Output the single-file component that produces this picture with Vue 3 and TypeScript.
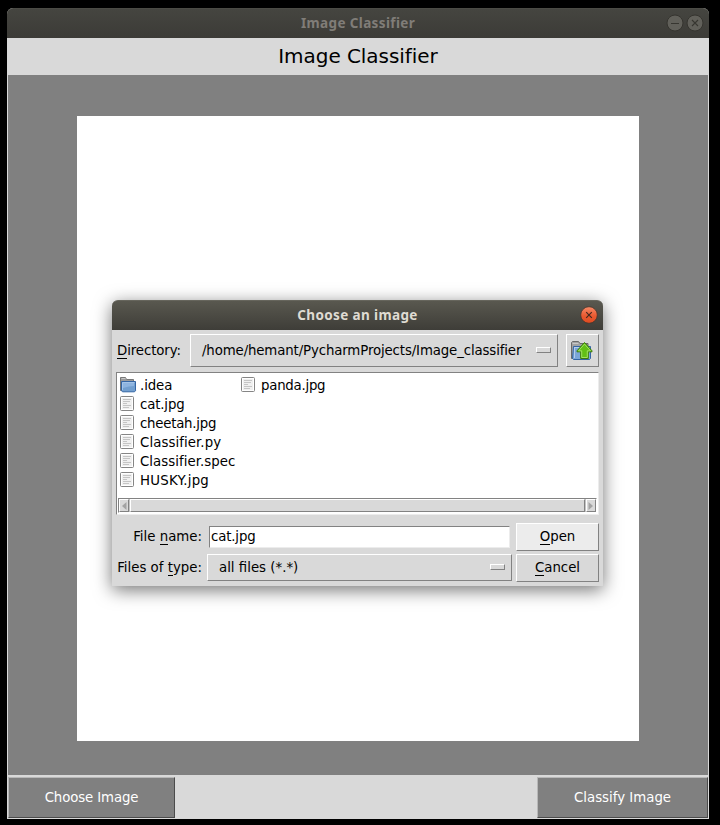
<script setup lang="ts">
interface Entry {
  name: string
  kind: 'folder' | 'file'
  tracking: number
}

const columns: Entry[][] = [
  [
    { name: '.idea', kind: 'folder', tracking: -0.1 },
    { name: 'cat.jpg', kind: 'file', tracking: -0.15 },
    { name: 'cheetah.jpg', kind: 'file', tracking: -0.25 },
    { name: 'Classifier.py', kind: 'file', tracking: 0.07 },
    { name: 'Classifier.spec', kind: 'file', tracking: 0.03 },
    { name: 'HUSKY.jpg', kind: 'file', tracking: 0.25 },
  ],
  [{ name: 'panda.jpg', kind: 'file', tracking: -0.25 }],
]
const fileName = 'cat.jpg'
const directory = '/home/hemant/PycharmProjects/Image_classifier'
</script>

<template>
  <div class="desktop">
    <main class="window">
      <header class="titlebar main-bar">
        <span class="bar-text">Image Classifier</span>
        <div class="controls">
          <svg class="ctl" viewBox="0 0 18 18">
            <circle cx="9" cy="9" r="8" fill="#61605a" stroke="#35342f" />
            <path d="M5 9.5h8" stroke="#373631" />
          </svg>
          <svg class="ctl" viewBox="0 0 18 18">
            <circle cx="9" cy="9" r="8" fill="#61605a" stroke="#35342f" />
            <path d="M6 6l6 6M12 6l-6 6" stroke="#373631" stroke-width="1.1" />
          </svg>
        </div>
      </header>
      <h1 class="heading">Image Classifier</h1>
      <section class="stage"><div class="canvas"></div></section>
      <footer class="footer">
        <button class="action choose">Choose Image</button>
        <button class="action classify">Classify Image</button>
      </footer>
    </main>

    <div class="dialog">
      <header class="titlebar dialog-bar">
        <span class="bar-text">Choose an image</span>
        <div class="controls">
          <svg class="ctl" viewBox="0 0 18 18">
            <defs>
              <linearGradient id="close" x1="0" y1="0" x2="0" y2="1">
                <stop offset="0" stop-color="#f58b68" />
                <stop offset=".55" stop-color="#ea5a31" />
                <stop offset="1" stop-color="#dd4a20" />
              </linearGradient>
            </defs>
            <circle cx="9" cy="9" r="8.3" fill="url(#close)" stroke="#45352c" stroke-width=".8" />
            <path d="M6.2 6.2l5.6 5.6M11.8 6.2l-5.6 5.6" stroke="#45291f" stroke-width="1.2" />
          </svg>
        </div>
      </header>

      <div class="dir-row">
        <label class="label dir-label"><u>D</u>irectory:</label>
        <div class="menu dir-menu raised">
          <span class="path">{{ directory }}</span>
          <i class="indicator raised"></i>
        </div>
        <button class="up raised">
          <svg width="22" height="20" viewBox="0 0 22 20">
            <path d="M.5 17.5V1.5l1-1h6l1.5 2h8v15z" fill="#a2a2a2" stroke="#6b6b6b" />
            <path d="M1.5 2.5h6" stroke="#c8c8c8" />
            <path d="M2.5 5.5h17v12l-1 1h-16l-1-1z" fill="#7ba6d8" stroke="#3465a4" />
            <path d="M3 6.5h16M3.5 7v10" stroke="#b4cdec" />
            <path d="M13.5 1.5l7.5 8.3v1h-3.7v6.7H9.7v-6.7H6v-1z" fill="#62bf16" stroke="#3c7b08" />
            <path d="M13.5 3.1l6 6.7h-3.2v6.7h-5.6V9.8H7.5z" fill="none" stroke="#a7e46b" stroke-width=".9" />
          </svg>
        </button>
      </div>

      <div class="list">
        <div class="columns">
          <ul v-for="(column, c) in columns" :key="c" class="column">
            <li v-for="entry in column" :key="entry.name" class="entry">
              <svg v-if="entry.kind === 'folder'" class="icon" viewBox="0 0 17 17">
                <path d="M.5 14.5v-13h5l1 2h7v11z" fill="#9b9b9b" stroke="#777" />
                <path d="M1.5 2.5h4" stroke="#c6c6c6" />
                <path d="M1.5 5.5h14v9.3l-1 1h-12l-1-1z" fill="#729fcf" stroke="#3465a4" />
                <path d="M2.5 14V6.5h12" fill="none" stroke="#a5c5e8" />
                <path d="M3 7h11v3q-5 0-11 2z" fill="#8eb4df" />
              </svg>
              <svg v-else class="icon" viewBox="0 0 17 17">
                <rect x=".5" y="1.5" width="13" height="14" rx="1" fill="#f0f0f0" stroke="#858585" />
                <rect x="1.5" y="2.5" width="11" height="12" fill="none" stroke="#fff" />
                <path d="M3 4.5h8M3 6.5h7M3 8.5h4M3 10.5h8M3 12.5h6" stroke="#c5c5c5" />
              </svg>
              <span :style="{ letterSpacing: entry.tracking + 'px' }">{{ entry.name }}</span>
            </li>
          </ul>
        </div>
        <div class="scrollbar">
          <div class="arrow raised"><svg width="6" height="10" viewBox="0 0 6 10"><path d="M5.5 1v8L1 5z" fill="#a3a3a3" /></svg></div>
          <div class="thumb raised"></div>
          <div class="arrow raised"><svg width="6" height="10" viewBox="0 0 6 10"><path d="M.5 1v8L5 5z" fill="#a3a3a3" /></svg></div>
        </div>
      </div>

      <div class="form">
        <label class="label right">File <u>n</u>ame:</label>
        <div class="input">{{ fileName }}</div>
        <button class="btn raised open"><span><u>O</u>pen</span></button>
        <label class="label right">Files of <u>t</u>ype:</label>
        <div class="menu type-menu raised">
          <span>all files (*.*)</span>
          <i class="indicator raised"></i>
        </div>
        <button class="btn raised"><span><u>C</u>ancel</span></button>
      </div>
    </div>
  </div>
</template>

<style>
body {
  background: #000;
  overflow: hidden;
}
</style>

<style scoped>
* {
  box-sizing: border-box;
}
.desktop {
  position: relative;
  width: 720px;
  height: 825px;
  padding: 8px 11px 6px 7px;
  background: #000;
  color: #000;
  font: 13.33px/16px "DejaVu Sans", sans-serif;
  white-space: nowrap;
}
button {
  font: inherit;
  padding: 0;
  margin: 0;
}
u {
  text-decoration: none;
  box-shadow: 0 1px 0 #000;
}
.window {
  display: flex;
  flex-direction: column;
  width: 702px;
  height: 811px;
  background: #d9d9d9;
  border-radius: 6px 6px 0 0;
}
.titlebar {
  display: grid;
  grid-template-columns: 1fr auto 1fr;
  align-items: center;
  height: 30px;
  flex: none;
  padding: 0 5px 1px 0;
  border-radius: 6px 6px 0 0;
  font: bold 13.5px/18px "Noto Sans", sans-serif;
  letter-spacing: 0.37px;
}
.main-bar {
  background: linear-gradient(#454540, #3c3b37);
  border-top: 1px solid #4b4b45;
  color: #807d78;
}
.dialog-bar {
  background: linear-gradient(#59584f, #3e3d38);
  border-top: 1px solid #66655c;
  color: #dfdbd2;
}
.bar-text {
  grid-column: 2;
  padding-left: 5px;
}
.controls {
  display: flex;
  gap: 2px;
  justify-content: flex-end;
}
.ctl {
  width: 18px;
  height: 18px;
}
.heading {
  margin: 0;
  height: 37px;
  font-size: 20px;
  line-height: 36px;
  font-weight: 400;
  letter-spacing: -0.05px;
  text-align: center;
}
.stage {
  height: 700px;
  margin: 0 1px;
  padding: 41px 69px 34px;
  background: #808080;
}
.canvas {
  height: 625px;
  background: #fff;
}
.footer {
  display: flex;
  justify-content: space-between;
  padding: 2px 1px 1px;
  height: 44px;
}
.action {
  height: 41px;
  color: #fff;
  background: #808080;
  border: 1px solid;
  border-color: #b8b8b8 #4b4b4b #4b4b4b #b8b8b8;
}
.choose {
  width: 167px;
  letter-spacing: -0.12px;
}
.classify {
  width: 171px;
}
.dialog {
  position: absolute;
  left: 112px;
  top: 300px;
  width: 491px;
  height: 286px;
  background: #d9d9d9;
  border-radius: 6px 6px 0 0;
  box-shadow: 0 4px 18px rgba(0, 0, 0, 0.55);
}
.raised {
  border: 1px solid;
  border-color: #fff #828282 #828282 #fff;
  background: #d9d9d9;
}
.dir-row {
  display: flex;
  align-items: center;
  padding: 4px 4px 0 5px;
  height: 37px;
}
.dir-label {
  letter-spacing: -0.1px;
}
.dir-menu {
  height: 33px;
  width: 368px;
  margin-left: auto;
}
.path {
  letter-spacing: -0.13px;
}
.menu {
  display: flex;
  align-items: center;
  justify-content: space-between;
  padding: 0 6px 0 11px;
}
.indicator {
  width: 15px;
  height: 6px;
  margin-bottom: 2px;
}
.up {
  width: 33px;
  height: 33px;
  margin-left: 8px;
  padding-right: 1px;
  display: flex;
  align-items: center;
  justify-content: center;
}
.list {
  margin: 5px 4px 0;
  height: 143px;
  display: flex;
  flex-direction: column;
  justify-content: space-between;
  background: #fff;
  border: 1px solid;
  border-color: #828282 #ececec #ececec #828282;
  padding: 3px 0 1px 1px;
}
.columns {
  display: flex;
  padding-left: 2px;
}
.column {
  list-style: none;
  margin: 0;
  padding: 0;
  width: 121px;
}
.entry {
  display: flex;
  align-items: center;
  height: 19px;
  gap: 3px;
}
.icon {
  width: 17px;
  height: 17px;
  margin-bottom: 2px;
}
.scrollbar {
  display: flex;
  width: 479px;
  height: 15px;
  border: 1px solid;
  border-color: #828282 #fff #fff #828282;
  gap: 1px;
  background: #c3c3c3;
}
.arrow {
  width: 10px;
  display: flex;
  align-items: center;
  justify-content: center;
}
.thumb {
  flex: 1;
}
.form {
  display: grid;
  grid-template-columns: 85px 305px 83px;
  grid-template-rows: 28px 28px;
  column-gap: 5px;
  row-gap: 3px;
  padding: 8px 4px 0 5px;
  align-items: center;
}
.right {
  text-align: right;
}
.input {
  height: 22px;
  margin: 0 2px;
  padding: 0 1px;
  line-height: 19px;
  letter-spacing: -0.15px;
  background: #fff;
  border: 1px solid;
  border-color: #828282 #ececec #ececec #828282;
}
.btn {
  width: 83px;
  height: 28px;
  margin-left: -1px;
}
.open {
  background: #ececec;
}
.type-menu {
  height: 27px;
  align-self: start;
}
</style>
